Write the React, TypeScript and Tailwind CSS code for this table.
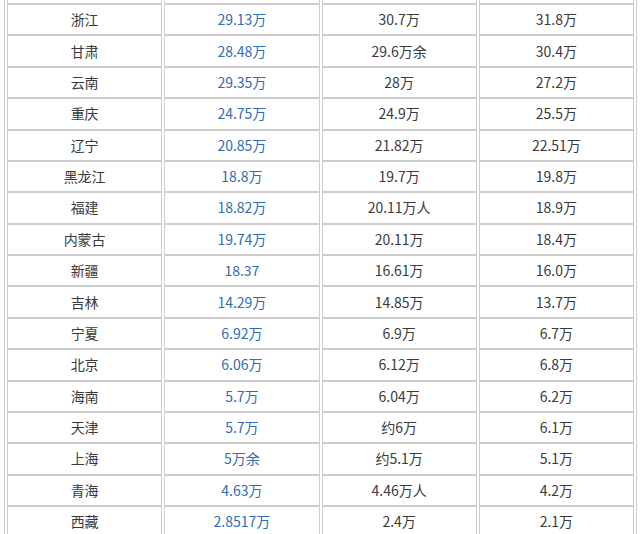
const rows: [string, string, string, string][] = [
  ["浙江", "29.13万", "30.7万", "31.8万"],
  ["甘肃", "28.48万", "29.6万余", "30.4万"],
  ["云南", "29.35万", "28万", "27.2万"],
  ["重庆", "24.75万", "24.9万", "25.5万"],
  ["辽宁", "20.85万", "21.82万", "22.51万"],
  ["黑龙江", "18.8万", "19.7万", "19.8万"],
  ["福建", "18.82万", "20.11万人", "18.9万"],
  ["内蒙古", "19.74万", "20.11万", "18.4万"],
  ["新疆", "18.37", "16.61万", "16.0万"],
  ["吉林", "14.29万", "14.85万", "13.7万"],
  ["宁夏", "6.92万", "6.9万", "6.7万"],
  ["北京", "6.06万", "6.12万", "6.8万"],
  ["海南", "5.7万", "6.04万", "6.2万"],
  ["天津", "5.7万", "约6万", "6.1万"],
  ["上海", "5万余", "约5.1万", "5.1万"],
  ["青海", "4.63万", "4.46万人", "4.2万"],
  ["西藏", "2.8517万", "2.4万", "2.1万"],
];

function Cell({ children, blue }: { children: string; blue?: boolean }) {
  return (
    <div
      className={`flex items-center justify-center border border-[#cdcdcd] text-[14px] ${
        blue ? "text-[#2f6cb5]" : "text-[#3a3a3a]"
      }`}
    >
      {children}
    </div>
  );
}

export default function App() {
  return (
    <div
      className="h-screen overflow-hidden bg-white"
      style={{ fontFamily: '"Noto Sans CJK SC", "Liberation Sans", sans-serif' }}
    >
      <div className="ml-[4px] w-[633px] border-x border-[#cdcdcd] px-[2px]">
        {/* tail of the row above, cut off by the viewport */}
        <div className="grid h-[4px] grid-cols-4 gap-x-[2px]">
          {[0, 1, 2, 3].map((i) => (
            <div key={i} className="border-x border-b border-[#cdcdcd]" />
          ))}
        </div>
        {rows.map((row) => (
          <div key={row[0]} className="grid h-[31.375px] grid-cols-4 gap-x-[2px]">
            <Cell>{row[0]}</Cell>
            <Cell blue>{row[1]}</Cell>
            <Cell>{row[2]}</Cell>
            <Cell>{row[3]}</Cell>
          </div>
        ))}
      </div>
    </div>
  );
}
